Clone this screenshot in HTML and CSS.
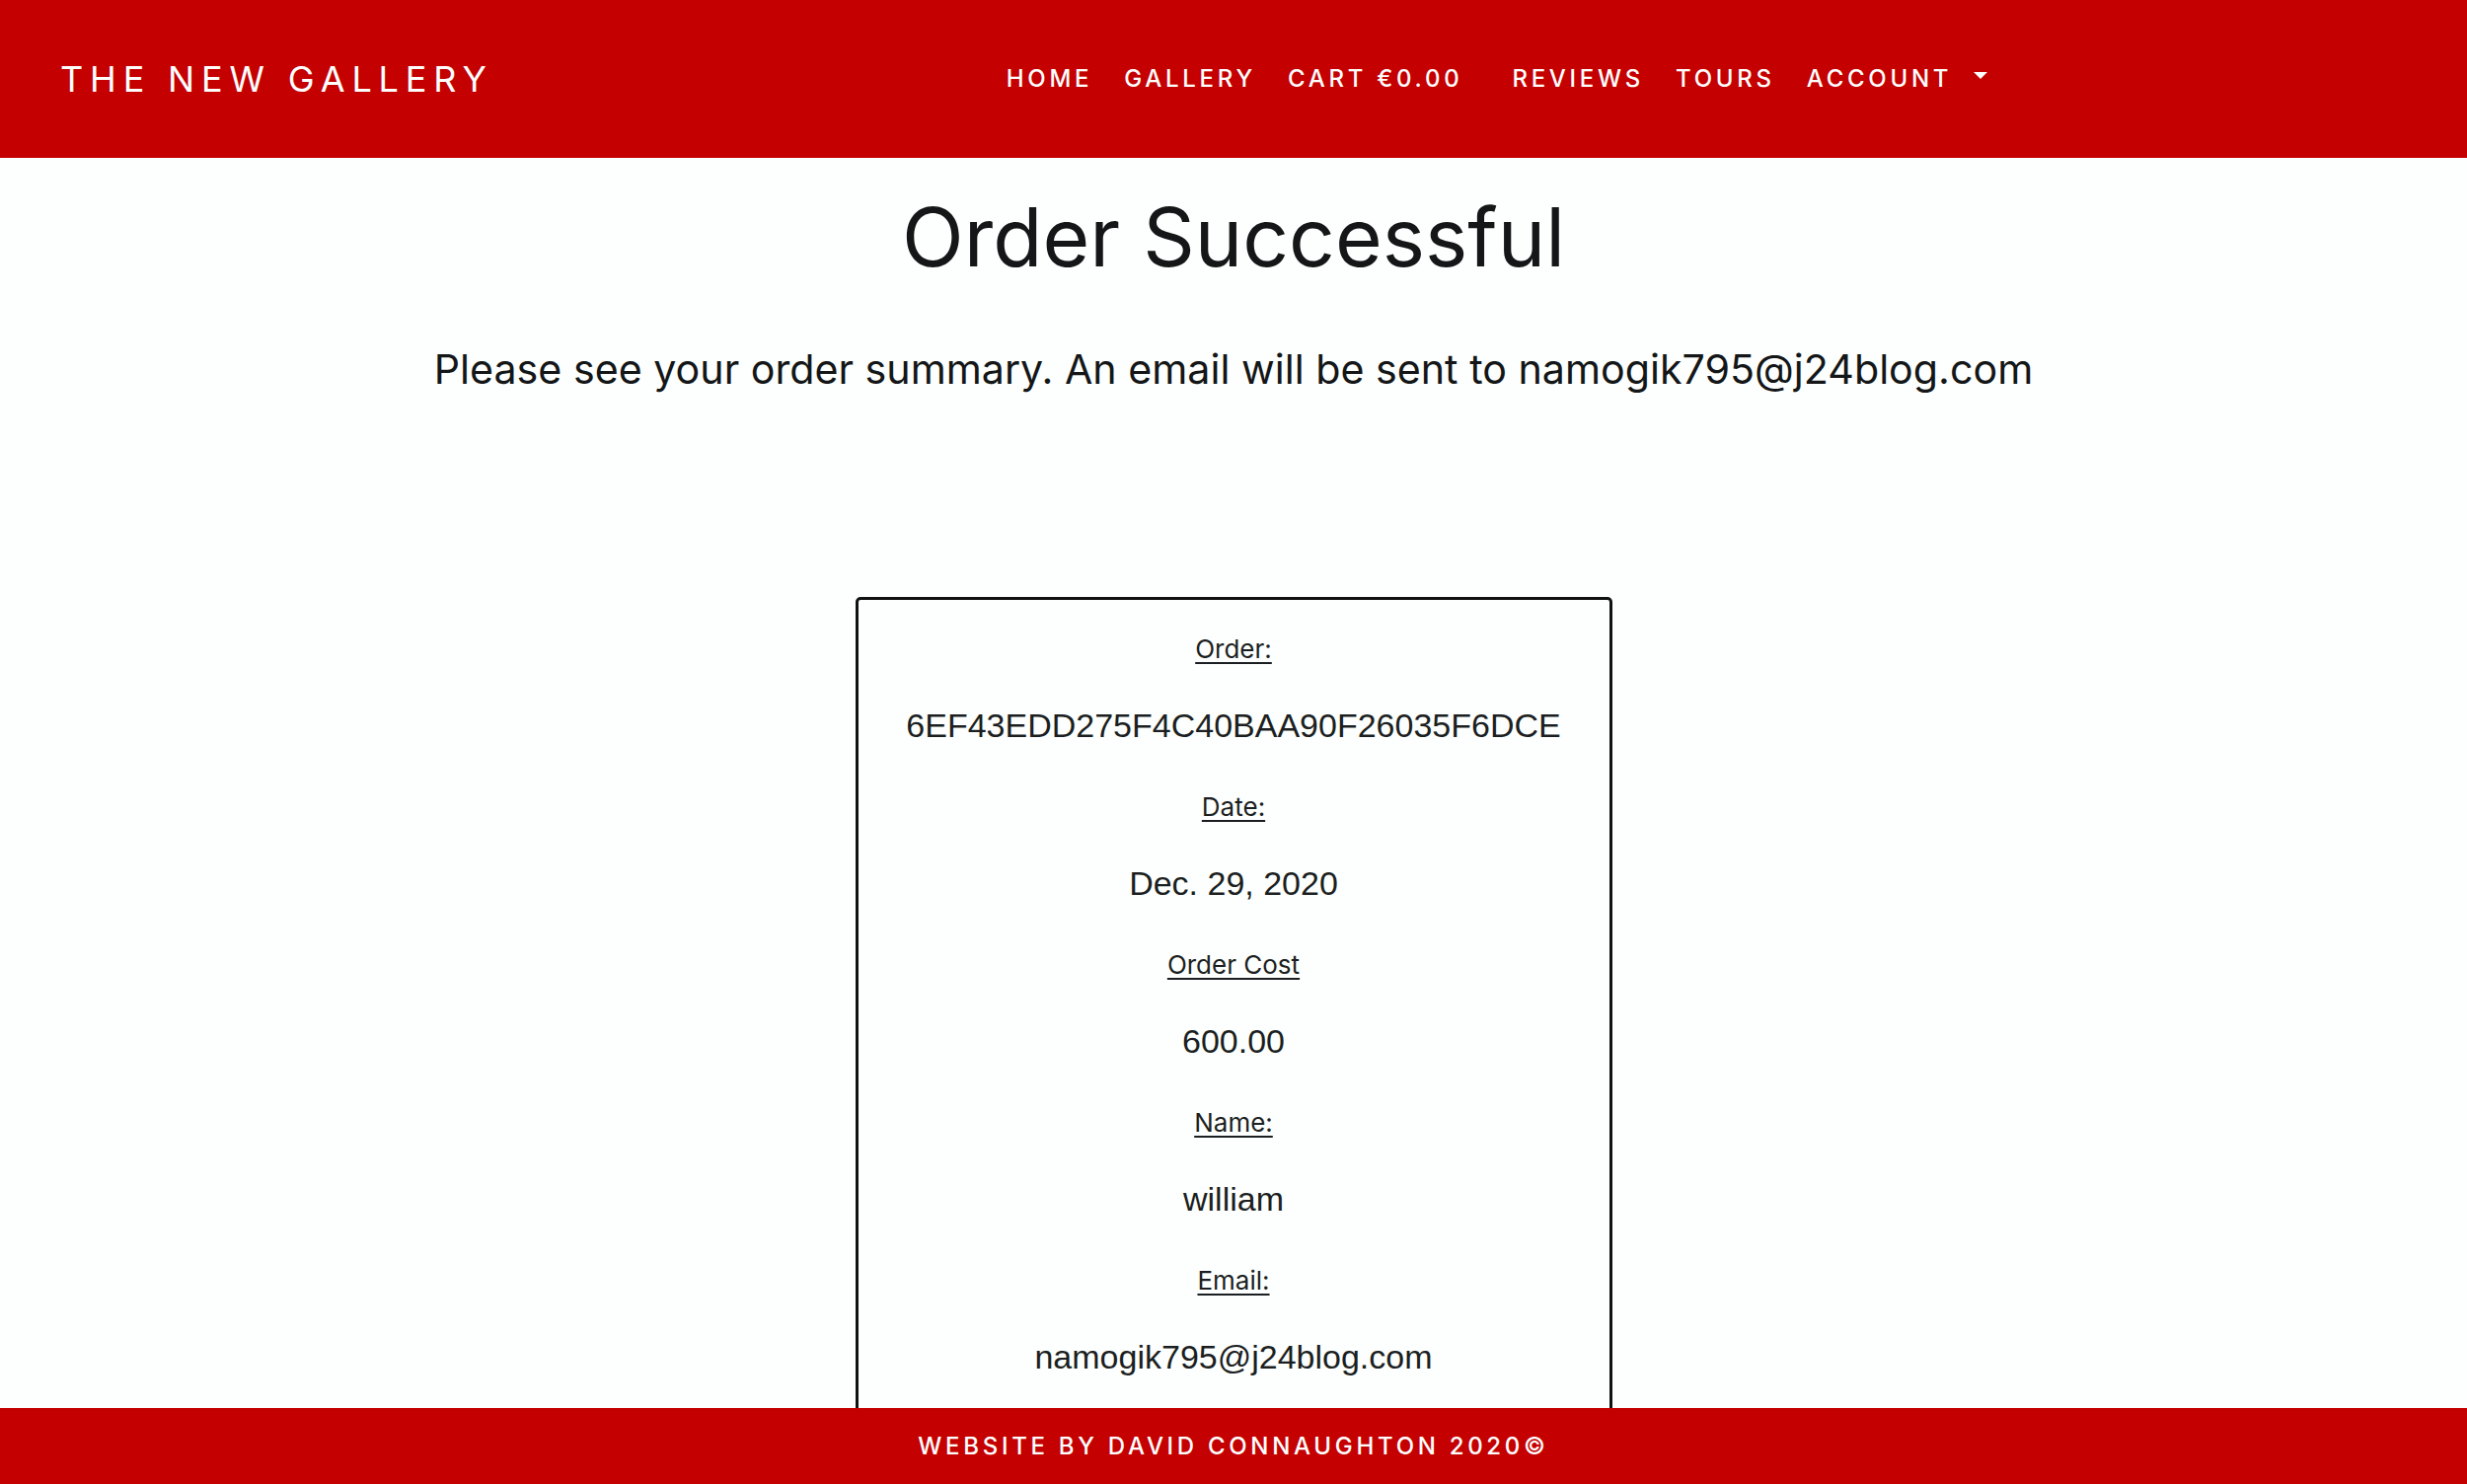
FILE: index.html
```html
<!DOCTYPE html>
<html lang="en">
<head>
<meta charset="utf-8">
<title>The New Gallery - Order Successful</title>
<link rel="stylesheet" href="styles.css">
</head>
<body>
<header class="site-header">
  <a class="brand" href="#">THE NEW GALLERY</a>
  <nav class="main-nav">
    <a class="nav-link" href="#">HOME</a>
    <a class="nav-link" href="#">GALLERY</a>
    <a class="nav-link cart" href="#">CART €0.00</a>
    <a class="nav-link" href="#">REVIEWS</a>
    <a class="nav-link" href="#">TOURS</a>
    <a class="nav-link dropdown" href="#">ACCOUNT<span class="caret"></span></a>
  </nav>
</header>
<main class="content">
  <h1 class="title">Order Successful</h1>
  <p class="lead">Please see your order summary. An email will be sent to namogik795@j24blog.com</p>
  <section class="summary">
    <div class="label">Order:</div>
    <div class="value">6EF43EDD275F4C40BAA90F26035F6DCE</div>
    <div class="label">Date:</div>
    <div class="value">Dec. 29, 2020</div>
    <div class="label">Order Cost</div>
    <div class="value">600.00</div>
    <div class="label">Name:</div>
    <div class="value">william</div>
    <div class="label">Email:</div>
    <div class="value">namogik795@j24blog.com</div>
  </section>
</main>
<footer class="site-footer">WEBSITE BY DAVID CONNAUGHTON 2020©</footer>
</body>
</html>
```
FILE: styles.css
```css
* { box-sizing: border-box; }
html, body { margin: 0; padding: 0; }
body {
  background: #fcfffd;
  color: #1c1f22;
  font-family: "Inter", "Open Sans", sans-serif;
}
a { text-decoration: none; color: inherit; }

.site-header {
  background: #c40000;
  height: 160px;
  display: flex;
  align-items: center;
  padding: 0 0 0 61px;
}
.brand {
  color: #fff;
  font-size: 36px;
  letter-spacing: 0.19em;
  font-weight: 400;
  padding-bottom: 1px;
}
.main-nav {
  display: flex;
  align-items: center;
  margin-left: 504px;
  padding-bottom: 2px;
}
.nav-link {
  color: #fff;
  font-size: 24px;
  letter-spacing: 0.155em;
  padding: 0 16px;
  font-weight: 500;
  display: flex;
  align-items: center;
}
.nav-link.cart { margin-right: 18px; }
.caret {
  display: inline-block;
  width: 0; height: 0;
  border-left: 7px solid transparent;
  border-right: 7px solid transparent;
  border-top: 7px solid #fff;
  margin-left: 22px;
  margin-bottom: 6px;
}

.content {
  display: flex;
  flex-direction: column;
  align-items: center;
}
.title {
  font-size: 82px;
  font-weight: 400;
  margin: 32px 0 0;
  line-height: 1.2;
  letter-spacing: 0;
  color: #141618;
}
.lead {
  font-size: 41.2px;
  margin: 54px 0 0;
  line-height: 1.5;
  color: #141618;
}
.summary {
  margin-top: 199px;
  width: 767px;
  border: 3px solid #111;
  border-radius: 5px;
  display: flex;
  flex-direction: column;
  align-items: center;
  padding: 32px 0 120px;
  margin-bottom: 40px;
}
.label {
  font-size: 26px;
  text-decoration: underline;
  text-underline-offset: 4px;
  line-height: 36px;
}
.value {
  font-family: "Liberation Sans", Arial, sans-serif;
  font-size: 34px;
  line-height: 44px;
  margin: 37px 0 43px;
}

.site-footer {
  position: fixed;
  left: 0; right: 0; bottom: 0;
  height: 77px;
  background: #c40000;
  color: #fff;
  display: flex;
  align-items: center;
  justify-content: center;
  font-size: 24px;
  letter-spacing: 3.7px;
  font-weight: 500;
}
```
